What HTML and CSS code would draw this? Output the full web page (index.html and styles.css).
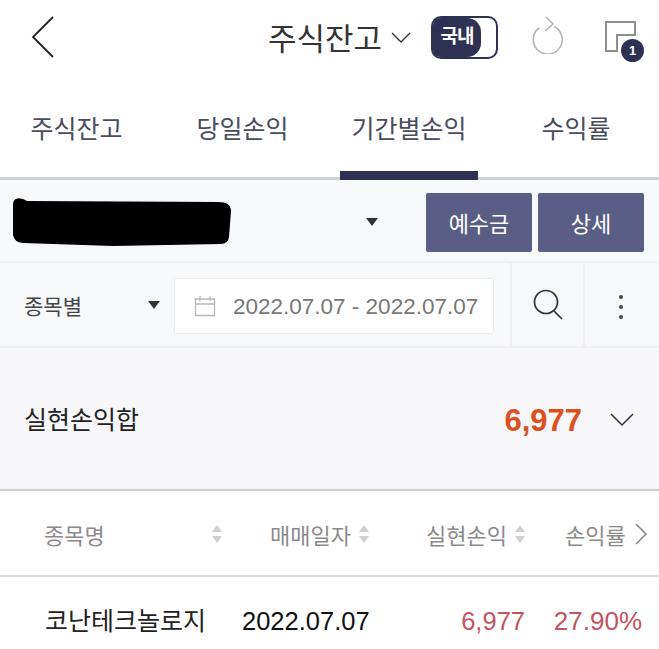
FILE: index.html
```html
<!DOCTYPE html>
<html>
<head>
    <title>주식잔고</title>
    <link rel="stylesheet" href="styles.css">
</head>
<body>

    <header class="topbar">
        <svg class="back" width="26" height="44" viewBox="0 0 26 44"><path d="M23 2 L3 22 L23 42" fill="none" stroke="#222" stroke-width="1.8"/></svg>
        <div class="title">주식잔고</div>
        <svg class="title-arrow" width="20" height="12" viewBox="0 0 20 12"><path d="M1 1 L10 10 L19 1" fill="none" stroke="#333" stroke-width="1.4"/></svg>
        <div class="toggle"><span class="toggle-on">국내</span></div>
        <svg class="refresh" width="34" height="38" viewBox="0 0 34 38"><path d="M8 12 A14.5 14.5 0 1 0 23 10.5" fill="none" stroke="#b5b5b5" stroke-width="1.6"/><path d="M15 1 L22 8 L14 15" fill="none" stroke="#b5b5b5" stroke-width="1.6"/></svg>
        <div class="windows">
            <svg width="32" height="32" viewBox="0 0 32 32"><path d="M1 1 H30 V14 H12 V30 H1 Z" fill="none" stroke="#8f8f8f" stroke-width="2"/></svg>
            <span class="badge">1</span>
        </div>
    </header>

    <nav class="tabs">
        <div class="tab tab-1">주식잔고</div>
        <div class="tab tab-2">당일손익</div>
        <div class="tab tab-3 active">기간별손익</div>
        <div class="tab tab-4">수익률</div>
    </nav>

    <section class="account">
        <svg class="scribble" width="220" height="50" viewBox="0 0 220 50"><path d="M3 2 Q8 0 14 4 L205 5 Q218 5 218 14 L216 40 Q215 47 208 47 L100 49 L10 46 Q1 45 0 38 L0 8 Q0 3 3 2 Z" fill="#000"/></svg>
        <span class="caret account-caret"></span>
        <button class="btn">예수금</button>
        <button class="btn">상세</button>
    </section>

    <section class="filter">
        <div class="filter-type">
            <span>종목별</span>
            <span class="caret"></span>
        </div>
        <div class="date-box">
            <svg width="22" height="22" viewBox="0 0 22 22"><path d="M1.5 4 H20.5 V20.5 H1.5 Z M1.5 9 H20.5 M6 1 V6 M16 1 V6" fill="none" stroke="#b9b9b9" stroke-width="1.3"/></svg>
            <span class="date-text">2022.07.07 - 2022.07.07</span>
        </div>
        <div class="icon-cell search-cell">
            <svg width="30" height="32" viewBox="0 0 30 32"><circle cx="13" cy="13" r="11.5" fill="none" stroke="#333" stroke-width="1.7"/><path d="M21 22 L29 30" stroke="#333" stroke-width="1.7"/></svg>
        </div>
        <div class="icon-cell more-cell"><i></i><i></i><i></i></div>
    </section>

    <section class="summary">
        <span class="summary-label">실현손익합</span>
        <span class="summary-value">6,977</span>
        <svg class="summary-arrow" width="24" height="14" viewBox="0 0 24 14"><path d="M1 1 L12 12 L23 1" fill="none" stroke="#333" stroke-width="1.5"/></svg>
    </section>

    <section class="table-head">
        <div class="th th-name"><span>종목명</span><span class="sort"></span></div>
        <div class="th th-date"><span>매매일자</span><span class="sort"></span></div>
        <div class="th th-profit"><span>실현손익</span><span class="sort"></span></div>
        <div class="th th-rate">
            <span>손익률</span>
            <svg width="14" height="22" viewBox="0 0 14 22"><path d="M2 1 L12 11 L2 21" fill="none" stroke="#8a8a8a" stroke-width="1.5"/></svg>
        </div>
    </section>

    <section class="table-row">
        <div class="td-name">코난테크놀로지</div>
        <div class="td-date">2022.07.07</div>
        <div class="td-profit">6,977</div>
        <div class="td-rate">27.90%</div>
    </section>

</body>
</html>
```

FILE: styles.css
```css
* {
    box-sizing: border-box;
}

body {
    margin: 0;
    height: 649px;
    overflow: hidden;
    background: #fff;
    font-family: "Liberation Sans", "Noto Sans CJK KR", sans-serif;
}

.topbar {
    height: 78px;
    display: flex;
    align-items: center;
    padding: 0 14px 4px 30px;
}

.title {
    margin-left: 212px;
    margin-top: -2px;
    font-size: 31px;
    color: #333;
}

.title-arrow {
    margin-left: 9px;
    margin-top: 2px;
}

.toggle {
    width: 67px;
    height: 43px;
    margin-left: 20px;
    border: 2px solid #2e3152;
    border-radius: 10px;
    background: #fff;
}

.toggle-on {
    display: block;
    width: 48px;
    height: 39px;
    line-height: 38px;
    border-radius: 7px 14px 14px 7px;
    background: #2e3152;
    color: #fff;
    font-size: 19px;
    font-weight: bold;
    letter-spacing: -1px;
    text-align: center;
}

.refresh {
    margin: -4px 0 0 33px;
}

.windows {
    position: relative;
    width: 32px;
    height: 32px;
    margin-left: 40px;
}

.badge {
    position: absolute;
    right: -7px;
    bottom: -9px;
    width: 23px;
    height: 23px;
    line-height: 23px;
    border-radius: 50%;
    background: #2e3152;
    color: #fff;
    font-size: 13px;
    font-weight: bold;
    text-align: center;
}

.tabs {
    height: 102px;
    position: relative;
    display: flex;
    border-bottom: 3px solid #d0d0d2;
}

.tab {
    padding-top: 31px;
    font-size: 25px;
    color: #4a4c5c;
    text-align: center;
}

.tab-1 { width: 153px; }
.tab-2 { width: 187px; padding-right: 8px; }
.tab-3 { width: 138px; position: relative; }
.tab-4 { width: 181px; padding-left: 15px; }

.tab.active::after {
    content: "";
    position: absolute;
    left: 0;
    right: 0;
    bottom: -3px;
    height: 9px;
    background: #2e3152;
}

.account {
    height: 83px;
    display: flex;
    align-items: center;
    background: #f7f8fa;
    border-bottom: 2px solid #efeff1;
    padding: 3px 0 0 13px;
}

.caret {
    width: 0;
    height: 0;
    border-left: 6px solid transparent;
    border-right: 6px solid transparent;
    border-top: 8px solid #333;
}

.account-caret {
    margin-left: 133px;
    margin-right: 48px;
}

.btn {
    width: 106px;
    height: 59px;
    margin-right: 6px;
    border: none;
    border-radius: 2px;
    background: #5a5d85;
    color: #fff;
    font-family: inherit;
    font-size: 22px;
}

.filter {
    height: 85px;
    display: flex;
    align-items: center;
    background: #f7f8fa;
    border-bottom: 2px solid #efeff1;
}

.filter-type {
    width: 174px;
    display: flex;
    align-items: center;
    justify-content: space-between;
    padding: 0 14px 0 24px;
    font-size: 21px;
    color: #444;
}

.date-box {
    width: 320px;
    height: 56px;
    margin: 2px 1px 0 0;
    display: flex;
    align-items: center;
    gap: 17px;
    padding-left: 19px;
    background: #fff;
    border: 1px solid #eceded;
    border-radius: 2px;
    color: #777;
    white-space: nowrap;
}

.date-text {
    margin-top: 3px;
    font-size: 22.5px;
}

.icon-cell {
    height: 83px;
    display: flex;
    align-items: center;
    justify-content: center;
}

.search-cell {
    width: 75px;
    margin-left: 15px;
    border-left: 2px solid #efeff1;
    border-right: 2px solid #efeff1;
}

.more-cell {
    width: 74px;
    flex-direction: column;
    gap: 6px;
    padding: 4px 2px 0 0;
}

.more-cell i {
    width: 4px;
    height: 4px;
    border-radius: 50%;
    background: #444;
}

.summary {
    height: 143px;
    display: flex;
    align-items: center;
    padding: 0 24px;
    background: #f7f7fa;
    border-bottom: 2px solid #cfcfcf;
}

.summary-label {
    font-size: 25px;
    color: #222;
    margin-top: -1px;
}

.summary-value {
    margin-left: auto;
    margin-right: 28px;
    font-size: 31px;
    font-weight: bold;
    color: #dc5020;
    margin-top: 5px;
}

.summary-arrow {
    margin: 2px 1px 0 0;
}

.table-head {
    height: 86px;
    display: flex;
    align-items: center;
    border-bottom: 2px solid #dcdcdc;
    font-size: 22px;
    color: #8a8a8a;
}

.th {
    display: flex;
    align-items: center;
    margin-top: 1px;
}

.th-name { width: 270px; padding-left: 44px; gap: 107px; }
.th-date { width: 156px; gap: 8px; }
.th-profit { width: 139px; gap: 8px; }
.th-rate { gap: 8px; }

.sort {
    display: flex;
    flex-direction: column;
    gap: 4px;
}

.sort::before,
.sort::after {
    content: "";
    width: 0;
    height: 0;
    border-left: 5.5px solid transparent;
    border-right: 5.5px solid transparent;
}

.sort::before {
    border-bottom: 7px solid #cfcfcf;
}

.sort::after {
    border-top: 7px solid #cfcfcf;
}

.table-row {
    display: flex;
    align-items: center;
    height: 88px;
    font-size: 25.5px;
}

.td-name { width: 242px; padding-left: 45px; color: #222; margin-top: -4px; font-size: 25px; white-space: nowrap; }
.td-date { width: 168px; color: #111; }
.td-profit { width: 115px; text-align: right; color: #c2545f; }
.td-rate { width: 117px; text-align: right; color: #c2545f; font-size: 26px; }
```
